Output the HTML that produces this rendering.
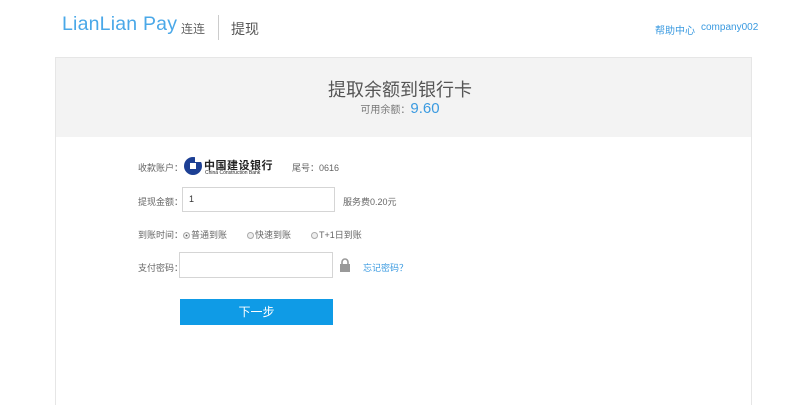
<!DOCTYPE html>
<html><head><meta charset="utf-8"><style>
*{margin:0;padding:0;box-sizing:border-box}
html,body{width:800px;height:405px;overflow:hidden}
body{background:#fff;font-family:"Liberation Sans","Noto Sans CJK SC",sans-serif;position:relative;color:#555}
.abs{position:absolute;white-space:nowrap}
.logo{left:62px;top:13px;font-size:19.5px;color:#4aa8e8;letter-spacing:0.2px}
.lc{left:181px;top:20px;font-size:12px;color:#666}
.sep{left:218px;top:15px;width:1px;height:25px;background:#ccc}
.tx{left:231px;top:19px;font-size:14px;color:#555}
.nav{top:22px;font-size:10px;color:#3a9ae0}
.panel{left:55px;top:57px;width:697px;height:360px;border:1px solid #e6e6e6;background:#fff}
.ph{left:56px;top:58px;width:695px;height:79px;background:#f3f3f3}
.t1{left:0;width:800px;text-align:center;top:76px;font-size:18px;color:#555}
.t2{left:0;width:800px;text-align:center;top:100px;font-size:10px;color:#777}
.t2 b{font-weight:normal;font-size:15px;color:#3a9ae0}
.lb{font-size:9px;color:#666}
.inp{border:1px solid #d5d5d5;background:#fff}
.btn{left:180px;top:299px;width:153px;height:26px;background:#0f9be6;color:#fff;font-size:12px;text-align:center;line-height:26px}
.rd{display:inline-block;width:7px;height:7px;border:1px solid #aaa;border-radius:50%;background:#eee;vertical-align:-1px;margin-right:1px}
</style></head><body>
<div class="abs logo">LianLian Pay</div>
<div class="abs lc">连连</div>
<div class="abs sep"></div>
<div class="abs tx">提现</div>
<div class="abs nav" style="left:655px">帮助中心</div>
<div class="abs nav" style="left:701px">company002</div>
<div class="abs panel"></div>
<div class="abs ph"></div>
<div class="abs t1">提取余额到银行卡</div>
<div class="abs t2">可用余额：<b>9.60</b></div>

<div class="abs lb" style="left:138px;top:161px">收款账户：</div>
<svg class="abs" style="left:183px;top:156px" width="20" height="20" viewBox="0 0 20 20"><circle cx="10" cy="10" r="9" fill="#1c3f94"/><rect x="7" y="7" width="6" height="6" fill="#fff"/><rect x="12" y="0" width="8" height="6" fill="#fff"/></svg>
<div class="abs" style="left:204px;top:157px;font-size:11px;font-weight:bold;color:#222;letter-spacing:0.5px">中国建设银行</div>
<div class="abs" style="left:205px;top:170px;font-size:5px;color:#222">China Construction Bank</div>
<div class="abs lb" style="left:292px;top:161px">尾号：0616</div>

<div class="abs lb" style="left:138px;top:195px">提现金额：</div>
<div class="abs inp" style="left:182px;top:187px;width:153px;height:25px"></div>
<div class="abs" style="left:189px;top:194px;font-size:9px;color:#333">1</div>
<div class="abs lb" style="left:343px;top:195px">服务费0.20元</div>

<div class="abs lb" style="left:138px;top:228px">到账时间：<span class="rd" style="background:#555;box-shadow:inset 0 0 0 1.5px #fff"></span>普通到账<span style="display:inline-block;width:20px"></span><span class="rd"></span>快速到账<span style="display:inline-block;width:20px"></span><span class="rd"></span>T+1日到账</div>

<div class="abs lb" style="left:138px;top:261px">支付密码：</div>
<div class="abs inp" style="left:179px;top:252px;width:154px;height:26px"></div>
<svg class="abs" style="left:339px;top:258px" width="12" height="14" viewBox="0 0 12 14"><path d="M3 6V4a3 3 0 0 1 6 0v2" stroke="#999" stroke-width="1.6" fill="none"/><rect x="1" y="6" width="10" height="8" fill="#999"/></svg>
<div class="abs" style="left:363px;top:261px;font-size:9px;color:#3a9ae0">忘记密码？</div>

<div class="abs btn">下一步</div>
</body></html>
